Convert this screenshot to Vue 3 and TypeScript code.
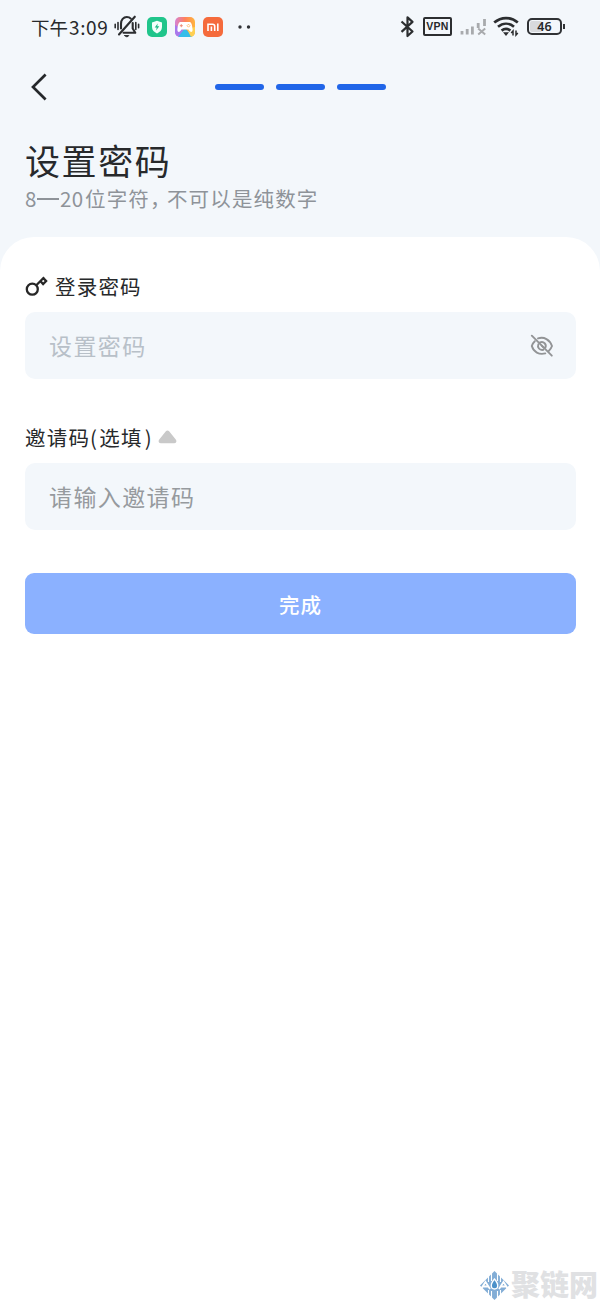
<script setup lang="ts">
import { ref } from 'vue'

const steps: number[] = [1, 2, 3]
const password = ref<string>('')
const inviteCode = ref<string>('')
</script>

<template>
  <main class="screen">
    <header class="status">
      <span class="time">下午<b>3:09</b></span>
      <svg class="bell" width="26" height="25" viewBox="0 0 26 25" fill="none" stroke="#2c2e30" stroke-width="2.1" stroke-linecap="round" stroke-linejoin="round">
        <path d="M7 14.5V9.8C7 5.800 9.500 3 12.800 3c1.600 0 3 .5 4 1.600M18.700 9v5.500l2.600 4.300H9.500" />
        <path d="M10.800 21.600h4c-.8 1.600-3.200 1.600-4 0Z" fill="#2c2e30" stroke-width="1" />
        <path d="M20.800 2.700 5 20.500" />
        <path d="M4 8.500v7M1.200 10.300v3.400M21.800 8.500v7M24.600 10.300v3.400" stroke-width="1.600" />
      </svg>
      <svg class="app" width="20" height="20" viewBox="0 0 20 20">
        <rect width="20" height="20" rx="5" fill="#20c58b" />
        <path d="M10 3.700 15 5.500v4.600c0 3.200-2.200 5.200-5 6.400-2.800-1.200-5-3.200-5-6.400V5.500Z" fill="#f3fffb" />
        <path d="M10.700 6.500 7.700 10.500h2l-.6 3 3.200-4.200h-2Z" fill="#20b985" />
      </svg>
      <svg class="app" width="20" height="20" viewBox="0 0 20 20">
        <defs>
          <linearGradient id="gamepad" x1="0" y1="0" x2="1" y2="0">
            <stop offset="0" stop-color="#d582d5" />
            <stop offset=".5" stop-color="#ff815c" />
            <stop offset="1" stop-color="#ffb63c" />
          </linearGradient>
          <clipPath id="tile"><rect width="20" height="20" rx="5" /></clipPath>
        </defs>
        <g clip-path="url(#tile)">
          <rect width="20" height="20" fill="url(#gamepad)" />
          <path d="M0 8 9 13 4 20H0Z" fill="#a879ed" />
          <path d="m3 20 7-9 8 9Z" fill="#35bde9" />
          <path d="m12 12 8-2v10h-4Z" fill="#ffd052" />
        </g>
        <path d="M5.200 5h9.600c1.900 0 2.700 5.500 2.800 8 0 2.300-2.200 2.500-3.200.8l-.9-1.300h-7l-.9 1.300c-1 1.700-3.200 1.500-3.200-.8.1-2.500.9-8 2.800-8Z" fill="#fff" />
        <path d="M4.800 8.700h3M6.300 7.200v3" stroke="#ef8d79" stroke-width="1" />
        <path d="m13.500 7.200 1.500 1.500-1.500 1.500L12 8.700Z" fill="none" stroke="#ffae58" stroke-width=".8" />
      </svg>
      <svg class="app" width="20" height="20" viewBox="0 0 20 20">
        <rect width="20" height="20" rx="5" fill="#f56b3c" />
        <path d="M5 14V7.200h4.500c1.500 0 2.200.7 2.200 2V14M8.400 9.500V14M14.800 6.400V14" fill="none" stroke="#fff" stroke-width="1.600" />
      </svg>
      <svg class="dots" width="14" height="4" viewBox="0 0 14 4" fill="#303236"><circle cx="3" cy="2" r="1.700" /><circle cx="11.500" cy="2" r="1.700" /></svg>
      <span class="spacer"></span>
      <svg class="bluetooth" width="15" height="22" viewBox="0 0 15 22" fill="none" stroke="#2c2e30" stroke-width="2.200" stroke-linejoin="round"><path d="m1.500 5.500 11 10-5 4.500V1.400l5 4.500-11 10" /></svg>
      <span class="vpn">VPN</span>
      <svg class="signal" width="28" height="18" viewBox="0 0 28 18" fill="none" stroke="#a8aaad" stroke-width="2.800">
        <path d="M2 16.500v-3.500M7.200 16.500v-5.500M12.400 16.500V8.500M18.200 10V5M24.500 8V1" />
        <path d="m18.200 10.500 7 6M25.200 10.500l-7 6" stroke-width="2" />
      </svg>
      <svg class="wifi" width="27" height="21" viewBox="0 0 27 21" fill="none" stroke="#2c2e30" stroke-width="2.700">
        <path d="M1.200 6.600c7-6.100 16.600-6.100 23.600 0M5 10.800c4.900-4.100 11.100-4.100 16 0M8.600 14.600c2.700-2.200 6.100-2.200 8.800 0" />
        <path d="M10 16.300h6L13 20Z" fill="#2c2e30" stroke="none" />
        <path d="M20 19.500V15l-1.800 2M23 14.500V19l1.800-2" stroke-width="1.500" />
      </svg>
      <span class="battery"><i></i><em>46</em></span>
      <span class="battery-tip"></span>
    </header>

    <nav class="nav">
      <button class="back" aria-label="返回">
        <svg width="18" height="28" viewBox="0 0 18 28" fill="none" stroke="#25282b" stroke-width="2.700"><path d="M15.600 1.500 3 14l12.600 12.500" /></svg>
      </button>
      <div class="steps"><i v-for="step in steps" :key="step"></i></div>
    </nav>

    <section class="heading">
      <h1>设置密码</h1>
      <p><span class="range">8<i></i>20</span>位字符<span class="comma">，</span>不可以是纯数字</p>
    </section>

    <form class="card" @submit.prevent>
      <label class="label" for="password">
        <svg class="key" width="23" height="23" viewBox="0 0 23 23" fill="none" stroke="#272727" stroke-width="2.300">
          <circle cx="7.300" cy="14.200" r="5.500" />
          <path d="m11.300 10.200 7.900-8M15.300 6l2.800 3 3-3-2.800-2.900" />
        </svg>
        <span>登录密码</span>
      </label>
      <div class="field">
        <input id="password" v-model="password" type="password" placeholder="设置密码" />
        <svg width="24" height="24" viewBox="0 0 24 24" fill="none" stroke="#929496" stroke-width="1.900" stroke-linecap="round">
          <path d="M8 4.400c6-2.200 11.900 1.400 14 7.600-.7 2-1.800 3.700-3.300 5M15.300 19.400C9 21 3.600 18 1.800 12c.5-1.900 1.600-3.500 3-4.800" />
          <path d="M10 8.400c3.800-1.500 6.800 2 5.400 5.100M13.400 15.800c-4 .8-6.300-2.400-5-5.600M11.700 11.600l2 2" />
          <path d="m1.800 1.700 20 20" />
        </svg>
      </div>

      <label class="label invite" for="invite">
        <span>邀请码<b>(</b>选填<b class="close">)</b></span>
        <svg width="19" height="16" viewBox="0 0 20 16"><path d="M8.500 1.800c.8-1 2.200-1 3 0l7 8.600c1.700 2 .7 4.100-1.500 4.100H3c-2.200 0-3.200-2.100-1.500-4.100Z" fill="#c9c9c9" /></svg>
      </label>
      <div class="field second"><input id="invite" v-model="inviteCode" type="text" placeholder="请输入邀请码" /></div>
      <button class="submit" type="submit">完成</button>
    </form>

    <footer class="brand">
      <svg width="32" height="30" viewBox="0 0 32 30">
        <path d="M15.500 0 30 14.500 15.500 29 1 14.500Z" fill="#82add6" />
        <path d="M9.500 2v9M12.500 0v10M18.500 0v10M21.500 4v7M9.500 19v8M12.500 20v9M18.500 20v9M21.500 19v8" stroke="#fff" stroke-width="1.100" />
        <path d="m2 18 4.500-7 4.500 7M4 15.500h5M20 18l4.500-7 4.500 7M22 15.500h5" fill="none" stroke="#fff" stroke-width="1.800" />
        <path d="M15.500 8c-5 6-3.500 10 0 10s5-4 0-10Z" fill="#4c91c9" stroke="#fff" stroke-width="1.300" />
      </svg>
      <span>聚链网</span>
    </footer>
  </main>
</template>

<style>
body { margin: 0; overflow: hidden; }
</style>

<style scoped>
* { box-sizing: border-box; }
.screen {
  position: relative;
  width: 600px;
  height: 1300px;
  display: flex;
  flex-direction: column;
  overflow: hidden;
  background: #f3f7fb;
  color: #27292b;
  font-family: "Noto Sans CJK SC", sans-serif;
}
.screen svg { display: block; flex: none; }
.status { height: 53px; display: flex; align-items: center; padding: 0 35px 0 31px; flex: none; }
.time { width: 83px; font-size: 18.500px; line-height: 24px; white-space: nowrap; }
.time b { font-weight: 400; font-size: 19px; letter-spacing: .6px; margin-left: 1px; }
.bell { margin-right: 7px; }
.app { margin-right: 8px; }
.dots { margin-left: 6px; }
.spacer { flex: 1; }
.bluetooth { margin-right: 8px; }
.vpn { width: 29px; height: 19px; border: 2px solid #2c2e30; border-radius: 2px; font: 700 10.500px/15px "Liberation Sans", sans-serif; text-align: center; letter-spacing: .3px; }
.signal { margin: 0 5px 0 8px; }
.wifi { margin-right: 7px; }
.battery { width: 35px; height: 17px; border: 2px solid #303235; border-radius: 5px; display: grid; padding: 1px; }
.battery i { grid-area: 1 / 1; width: 12px; background: #d8dadd; border-radius: 2px; }
.battery em { grid-area: 1 / 1; font: 600 12.500px/11px "Noto Sans", sans-serif; text-align: center; }
.battery-tip { width: 2px; height: 5px; margin-left: 1px; background: #303235; }
.nav { height: 67px; display: grid; grid-template-columns: 1fr 171px 1fr; align-items: center; flex: none; }
.back { justify-self: start; border: 0; padding: 0; margin-left: 30px; background: none; }
.steps { display: flex; gap: 12px; margin-left: .5px; }
.steps i { flex: none; width: 49px; height: 6px; border-radius: 3px; background: #2065e8; }
.heading { height: 117px; padding: 16px 25px 0; flex: none; }
h1 { margin: 0; font-weight: 400; font-size: 35px; line-height: 47px; letter-spacing: 1.600px; }
.heading p { display: flex; margin: 0; color: #8e9399; font-size: 20.500px; line-height: 30px; letter-spacing: 1.150px; }
.range { display: flex; align-items: center; width: 60px; letter-spacing: .5px; }
.range i { width: 22px; height: 1.500px; margin: 2px 1px 0 0; background: #8e9399; }
.comma { width: 17px; font-feature-settings: "halt"; }
.card { flex: 1; padding: 35px 24px 0 25px; border-radius: 34px 34px 0 0; background: #fff; }
.label { height: 28px; display: flex; align-items: center; font-size: 20.500px; line-height: 28px; letter-spacing: 1.200px; }
.key { margin-right: 7px; }
.field { height: 67px; margin-top: 12px; padding: 0 22px 0 24px; display: flex; align-items: center; background: #f3f7fb; border-radius: 10px; }
.field input { flex: 1; min-width: 0; margin-bottom: 2px; padding: 0; border: 0; outline: 0; background: transparent; color: #27292b; font: 400 23px/34px "Noto Sans CJK SC", sans-serif; letter-spacing: 1.400px; }
.field input::placeholder { color: #b8c0c8; opacity: 1; }
.field.second input::placeholder { color: #969a9e; }
.invite { margin-top: 44px; }
.invite b { font-weight: 400; margin: 0 1px 0 0; }
.invite .close { margin: 0 0 0 2px; }
.invite svg { margin-left: 5px; }
.submit { display: block; width: 100%; height: 61px; margin-top: 43px; padding: 1px 0 0; border: 0; border-radius: 9px; background: #8bb1ff; color: #fff; font: 500 20.500px/60px "Noto Sans CJK SC", sans-serif; letter-spacing: 1px; }
.brand { position: absolute; left: 479px; top: 1266px; width: 121px; height: 34px; display: flex; align-items: center; color: #e0e1e3; font-weight: 900; font-size: 29px; line-height: 34px; white-space: nowrap; }
.brand svg { margin-top: 6px; }
</style>
